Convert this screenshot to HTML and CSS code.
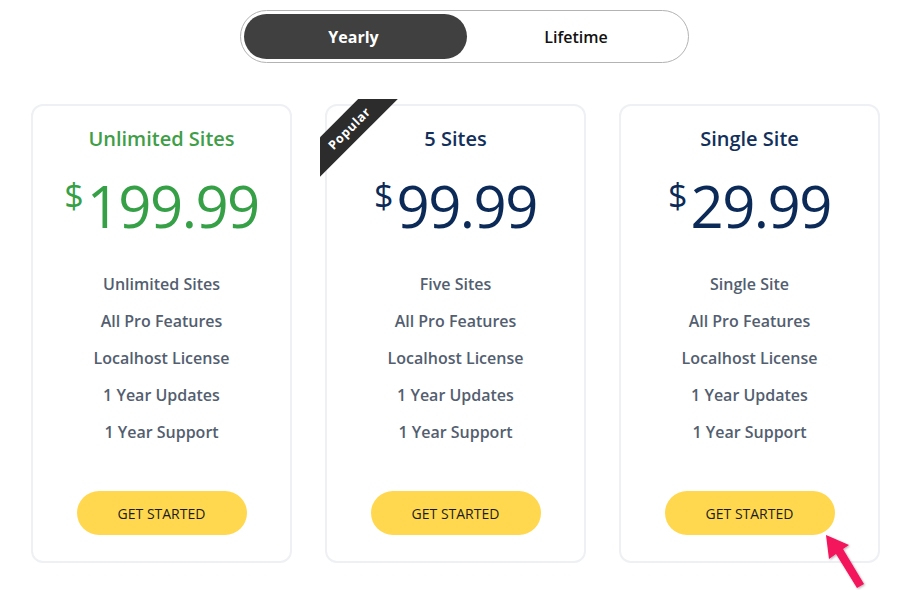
FILE: index.html
```html
<!DOCTYPE html>
<html lang="en">
<head>
<meta charset="utf-8">
<title>Pricing</title>
<link rel="stylesheet" href="styles.css">
</head>
<body>
<div class="page">
  <div class="toggle-wrap">
    <div class="toggle">
      <button class="tab active">Yearly</button>
      <button class="tab">Lifetime</button>
    </div>
  </div>

  <div class="cards">
    <div class="card">
      <h2 class="plan green">Unlimited Sites</h2>
      <div class="price green"><span class="cur">$</span><span class="amt">199.99</span></div>
      <ul class="features">
        <li>Unlimited Sites</li>
        <li>All Pro Features</li>
        <li>Localhost License</li>
        <li>1 Year Updates</li>
        <li>1 Year Support</li>
      </ul>
      <a class="cta">GET STARTED</a>
    </div>

    <div class="card">
      <div class="ribbon"><span class="band">Popular</span></div>
      <h2 class="plan navy">5 Sites</h2>
      <div class="price navy"><span class="cur">$</span><span class="amt">99.99</span></div>
      <ul class="features">
        <li>Five Sites</li>
        <li>All Pro Features</li>
        <li>Localhost License</li>
        <li>1 Year Updates</li>
        <li>1 Year Support</li>
      </ul>
      <a class="cta">GET STARTED</a>
    </div>

    <div class="card">
      <h2 class="plan navy">Single Site</h2>
      <div class="price navy"><span class="cur">$</span><span class="amt">29.99</span></div>
      <ul class="features">
        <li>Single Site</li>
        <li>All Pro Features</li>
        <li>Localhost License</li>
        <li>1 Year Updates</li>
        <li>1 Year Support</li>
      </ul>
      <a class="cta">GET STARTED</a>
    </div>
  </div>

  <svg class="pointer" width="60" height="70" viewBox="810 525 60 70" aria-hidden="true">
    <defs>
      <filter id="sh" x="-30%" y="-30%" width="160%" height="160%">
        <feDropShadow dx="1" dy="1" stdDeviation="1" flood-color="#000" flood-opacity="0.3"/>
      </filter>
    </defs>
    <polygon filter="url(#sh)" fill="#f4135b" points="826,535 849,545 843,549 864,584 857,588 836,554 829,559"/>
  </svg>
</div>
</body>
</html>
```

FILE: styles.css
```css
* { box-sizing: border-box; }
html, body { margin: 0; padding: 0; background: #fff; }
body { font-family: "Open Sans", "Noto Sans", sans-serif; }

.page { position: relative; width: 909px; height: 590px; overflow: hidden; }

.toggle-wrap { display: flex; justify-content: center; padding: 10px 0 0 20px; }
.toggle {
  display: flex; width: 449px; height: 53px; padding: 3px;
  border: 1px solid #b3b3b3; border-radius: 27px; background: #fff;
}
.tab {
  border: 0; background: transparent; font-family: inherit; font-size: 16px;
  font-weight: 600; color: #111; border-radius: 23px; flex: 1; padding: 0; cursor: pointer;
}
.tab.active { flex: 0 0 223px; background: #404040; color: #fff; font-weight: 700; padding-right: 4px; }

.cards { display: flex; gap: 33px; padding: 41px 0 0 31px; }
.card {
  position: relative; width: 261px; display: flex; flex-direction: column; align-items: center;
  border: 2px solid #eef0f4; border-radius: 12px; padding: 19px 0 26px;
}
.plan { margin: 0; font-size: 20px; line-height: 28px; font-weight: 600; }
.green { color: #36a047; }
.plan.green { color: #3f9e48; }
.navy { color: #0b2a57; }
.plan.navy { color: #13305a; }

.price { display: flex; align-items: flex-start; margin-top: 24px; }
.cur { font-size: 34px; line-height: 1; margin-top: 1px; margin-right: 3px; }
.amt { font-size: 58px; line-height: 58px; letter-spacing: -1.5px; font-weight: 400; }

.features { list-style: none; margin: 31px 0 0; padding: 0; text-align: center; }
.features li { font-size: 16px; line-height: 37px; color: #535e6f; font-weight: 600; }

.cta {
  margin-top: 40px; width: 170px; height: 44px; border-radius: 22px; background: #ffd84f;
  display: flex; align-items: center; justify-content: center;
  font-size: 14px; font-weight: 500; color: #1c1c1c; cursor: pointer;
}

.ribbon { position: absolute; top: -7px; left: -7px; width: 80px; height: 80px; overflow: hidden; }
.band {
  position: absolute; left: -31px; top: 15px; width: 120px; height: 28px;
  background: #2c2c2c; color: #fff; transform: rotate(-45deg);
  display: flex; align-items: center; justify-content: center;
  font-size: 12.5px; font-weight: 700; letter-spacing: 0.7px;
}

.pointer { position: absolute; left: 810px; top: 525px; }
```
